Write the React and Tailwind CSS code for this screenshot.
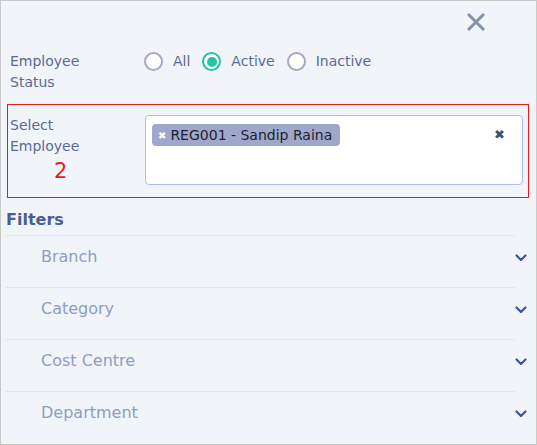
import { useState } from "react"

const font = { fontFamily: '"DejaVu Sans", "Noto Sans", sans-serif' }

const Radio = ({ label, checked, onClick }) => (
    <label className="flex items-center gap-[10px] cursor-pointer" onClick={onClick}>
        <span
            className={
                "w-[19px] h-[19px] rounded-full border-2 bg-white flex items-center justify-center " +
                (checked ? "border-[#20c4a6]" : "border-[#a5abc3]")
            }
        >
            {checked && <span className="w-[10px] h-[10px] rounded-full bg-[#20c4a6]" />}
        </span>
        <span className="text-[14px] text-[#5b6a96]">{label}</span>
    </label>
)

const Chevron = () => (
    <svg width="12" height="8" viewBox="0 0 12 8" fill="none">
        <path d="M1.5 1.5 L6 6 L10.5 1.5" stroke="#3e5596" strokeWidth="2.2" strokeLinecap="round" strokeLinejoin="round" />
    </svg>
)

const filters = ["Branch", "Category", "Cost Centre", "Department"]

export default function App() {
    const [status, setStatus] = useState("Active")

    return (
        <div className="w-[537px] h-[445px] bg-[#f1f4f9] border border-[#c9c9c9] relative overflow-hidden" style={font}>
            <div className="flex justify-end pr-[51px] pt-[12px] h-[40px]">
                <svg width="18" height="18" viewBox="0 0 18 18">
                    <path d="M2 2 L16 16 M16 2 L2 16" stroke="#8592a8" strokeWidth="3" strokeLinecap="square" />
                </svg>
            </div>

            <div className="flex pl-[9px] pt-[10px]">
                <div className="w-[134px] text-[14px] leading-[21px] text-[#5b6a96]">
                    Employee<br />Status
                </div>
                <div className="flex gap-[12px] h-[21px] items-center">
                    {["All", "Active", "Inactive"].map((s) => (
                        <Radio key={s} label={s} checked={status === s} onClick={() => setStatus(s)} />
                    ))}
                </div>
            </div>

            <div className="ml-[6px] mr-[7px] mt-[11px] border border-[#e51c1c] h-[94px] flex pt-[10px] pr-[5px]">
                <div className="w-[137px] pl-[2px] text-[14px] leading-[21px] text-[#5b6a96]">
                    Select<br />Employee
                    <div className="text-[21px] leading-[24px] text-[#e51c1c] pl-[44px] pt-[2px]">2</div>
                </div>
                <div className="flex-1 h-[70px] bg-white border border-[#a8bcf4] rounded-[4px] flex items-start justify-between px-[6px] pt-[8px]">
                    <span className="flex items-center gap-[4px] bg-[#9fa8ca] rounded-[4px] h-[22px] pl-[6px] pr-[8px] text-[14px] text-[#1b1f2e]">
                        <span className="text-white text-[10px]">✖</span>
                        REG001 - Sandip Raina
                    </span>
                    <span className="text-[#3f4f7e] text-[13px] pr-[11px] pt-[1px]">✖</span>
                </div>
            </div>

            <div className="px-[5px] pt-[10px]">
                <div className="text-[16px] font-bold leading-[24px] text-[#4b5d96] pb-[3px]">Filters</div>
                {filters.map((f) => (
                    <div key={f} className="border-t border-[#e1e4ea] w-[509px] h-[52px] flex items-start justify-between pl-[35px] pt-[9px]">
                        <span className="text-[16px] text-[#8d9ec4]">{f}</span>
                        <span className="mr-[-12px] pt-[9px]">
                            <Chevron />
                        </span>
                    </div>
                ))}
            </div>
        </div>
    )
}
